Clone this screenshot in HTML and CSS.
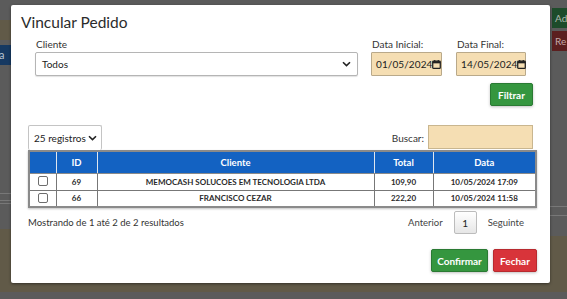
FILE: index.html
```html
<!DOCTYPE html>
<html lang="pt-BR">
<head>
<meta charset="utf-8">
<title>Vincular Pedido</title>
<link rel="stylesheet" href="styles.css">
</head>
<body>
<div class="page">
  <div class="side side-left">
    <div class="band gray h20"></div>
    <div class="band brown h20"></div>
    <div class="band gray h5"></div>
    <div class="band navy h20"><span class="peek">a</span></div>
    <div class="band gray h128"></div>
    <div class="band line"></div>
    <div class="band gray h6"></div>
    <div class="band line"></div>
    <div class="band gray h2"></div>
    <div class="band line"></div>
    <div class="band gray h25"></div>
    <div class="band brown grow"></div>
    <div class="band gray h7"></div>
  </div>
  <div class="side side-mid">
    <div class="band gray h5"></div>
    <div class="band gray grow"></div>
    <div class="band brown h62"></div>
    <div class="band gray h7"></div>
  </div>
  <div class="side side-right">
    <div class="band gray h8"></div>
    <div class="pbtn pgreen">Ad</div>
    <div class="band gray h3"></div>
    <div class="pbtn pred">Re</div>
    <div class="band gray h155"></div>
    <div class="band line"></div>
    <div class="band gray h8"></div>
    <div class="band line"></div>
    <div class="band gray h20"></div>
    <div class="band brown grow"></div>
    <div class="band gray h7"></div>
  </div>
</div>

<div class="modal">
  <h1 class="title">Vincular Pedido</h1>

  <div class="filters">
    <div class="field field-client">
      <label class="lbl">Cliente</label>
      <div class="select select-client">
        <span>Todos</span>
        <svg class="chev" width="9" height="6" viewBox="0 0 9 6"><path d="M1 1.2 4.5 4.6 8 1.2" fill="none" stroke="#222" stroke-width="1.6"/></svg>
      </div>
    </div>
    <div class="field field-date">
      <label class="lbl">Data Inicial:</label>
      <div class="date">
        <span class="dval">01/05/2024</span>
        <svg class="cal" width="9" height="9" viewBox="0 0 10 10"><rect x="0.8" y="1.3" width="8.4" height="8" rx="0.8" fill="none" stroke="#222" stroke-width="1.4"/><rect x="0.8" y="1.3" width="8.4" height="2.4" fill="#222"/><rect x="2.4" y="0" width="1.3" height="2" fill="#222"/><rect x="6.3" y="0" width="1.3" height="2" fill="#222"/></svg>
      </div>
    </div>
    <div class="field field-date2">
      <label class="lbl">Data Final:</label>
      <div class="date">
        <span class="dval">14/05/2024</span>
        <svg class="cal" width="9" height="9" viewBox="0 0 10 10"><rect x="0.8" y="1.3" width="8.4" height="8" rx="0.8" fill="none" stroke="#222" stroke-width="1.4"/><rect x="0.8" y="1.3" width="8.4" height="2.4" fill="#222"/><rect x="2.4" y="0" width="1.3" height="2" fill="#222"/><rect x="6.3" y="0" width="1.3" height="2" fill="#222"/></svg>
      </div>
    </div>
  </div>

  <div class="filter-action">
    <button class="btn btn-green btn-filter">Filtrar</button>
  </div>

  <div class="table-wrap">
    <div class="tools">
      <div class="select select-len">
        <span>25 registros</span>
        <svg class="chev" width="9" height="6" viewBox="0 0 9 6"><path d="M1 1.2 4.5 4.6 8 1.2" fill="none" stroke="#222" stroke-width="1.6"/></svg>
      </div>
      <div class="search">
        <span class="search-lbl">Buscar:</span>
        <div class="search-input"></div>
      </div>
    </div>

    <table class="grid">
      <colgroup>
        <col class="c-chk"><col class="c-id"><col class="c-cli"><col class="c-tot"><col class="c-dat">
      </colgroup>
      <thead>
        <tr><th></th><th>ID</th><th>Cliente</th><th>Total</th><th>Data</th></tr>
      </thead>
      <tbody>
        <tr><td><span class="chk"></span></td><td>69</td><td>MEMOCASH SOLUCOES EM TECNOLOGIA LTDA</td><td>109,90</td><td>10/05/2024 17:09</td></tr>
        <tr><td><span class="chk"></span></td><td>66</td><td>FRANCISCO CEZAR</td><td>222,20</td><td>10/05/2024 11:58</td></tr>
      </tbody>
    </table>

    <div class="info-row">
      <span class="info">Mostrando de 1 até 2 de 2 resultados</span>
      <div class="pager">
        <span class="pg-link">Anterior</span>
        <span class="pg-cur">1</span>
        <span class="pg-link">Seguinte</span>
      </div>
    </div>
  </div>

  <div class="modal-foot">
    <button class="btn btn-green btn-confirm">Confirmar</button>
    <button class="btn btn-red btn-close">Fechar</button>
  </div>
</div>
</body>
</html>
```
FILE: styles.css
```css
* { box-sizing: border-box; }
html, body { margin: 0; padding: 0; }
body {
  width: 567px;
  height: 299px;
  overflow: hidden;
  font-family: "Lato", "Noto Sans", sans-serif;
  background: #5b5b5b;
  position: relative;
}

/* background page (under the backdrop) */
.page {
  display: flex;
  height: 299px;
}
.side { display: flex; flex-direction: column; }
.side-left { width: 11px; }
.side-mid { flex: 1; }
.side-right { width: 17px; }
.band { flex: none; }
.grow { flex: 1; }
.gray { background: #5b5b5b; }
.brown { background: #615a48; }
.navy { background: #163962; color: #b9c4d2; font-size: 11px; line-height: 20px; overflow: hidden; }
.peek { margin-left: -1px; }
.line { height: 1px; background: #787878; }
.h2 { height: 2px; } .h3 { height: 3px; } .h5 { height: 5px; } .h6 { height: 6px; } .h7 { height: 7px; } .h8 { height: 8px; }
.h20 { height: 20px; } .h25 { height: 25px; } .h62 { height: 62px; } .h128 { height: 128px; } .h155 { height: 155px; }
.pbtn {
  height: 20px;
  font-size: 10px;
  line-height: 20px;
  padding-left: 3px;
  margin-left: 2px;
  white-space: nowrap;
}
.pgreen { background: #1d4b2a; color: #aeb9af; }
.pred { background: #5b1f1f; color: #c3a9a9; }

/* modal */
.modal {
  position: absolute;
  left: 11px;
  top: 5px;
  width: 539px;
  height: 278px;
  background: #fff;
  border-radius: 2px;
  box-shadow: 0 1px 3px rgba(0,0,0,0.45);
  display: flex;
  flex-direction: column;
  color: #333;
}
.title {
  margin: 0;
  padding: 8px 0 0 10px;
  height: 27px;
  font-size: 15.5px;
  line-height: 19px;
  font-weight: 400;
  color: #2b2b2b;
}

.filters {
  display: flex;
  gap: 13px;
  padding: 6px 24px 0 24px;
}
.field { display: flex; flex-direction: column; }
.field-client { width: 323px; }
.field-date { width: 71px; margin-right: 1px; }
.field-date2 { width: 70px; }
.lbl {
  font-size: 10px;
  line-height: 13px;
  color: #333;
  padding-left: 1px;
  height: 14px;
}

.select {
  display: flex;
  align-items: center;
  justify-content: space-between;
  border: 1px solid #b5b5b5;
  border-radius: 2px;
  background: #fff;
  color: #222;
  font-size: 10px;
  box-shadow: 0 1px 1px rgba(0,0,0,0.12);
}
.select-client { height: 24px; padding: 0 6px 0 6px; }
.date {
  height: 24px;
  display: flex;
  align-items: center;
  justify-content: space-between;
  background: #f5deb3;
  border: 1px solid #b9a98a;
  border-radius: 1px;
  padding: 0 3px 0 4px;
  font-size: 10px;
  color: #222;
}
.dval { white-space: nowrap; letter-spacing: 0.1px; }
.cal { flex: none; }

.filter-action {
  display: flex;
  justify-content: flex-end;
  padding: 7px 17px 0 0;
}
.btn {
  font-family: inherit;
  border-radius: 2px;
  color: #fff;
  font-size: 10px;
  font-weight: 700;
  height: 23px;
  padding: 0;
  cursor: pointer;
  box-shadow: 0 1px 3px rgba(0,0,0,0.25);
}
.btn-green { background: #35963f; border: 1px solid #2a7a33; }
.btn-red { background: #d8343a; border: 1px solid #b82a2f; }
.btn-filter { width: 43px; }

.table-wrap {
  padding: 19px 13px 0 17px;
}
.tools {
  display: flex;
  justify-content: space-between;
  align-items: flex-end;
  height: 25px;
}
.select-len {
  width: 74px;
  height: 25px;
  padding: 0 4px 0 5px;
  border-color: #c4c4c4;
  border-bottom: none;
  box-shadow: none;
}
.search { display: flex; align-items: center; gap: 4px; margin-right: 4px; }
.search-lbl { font-size: 10px; color: #333; }
.search-input {
  width: 105px;
  height: 24px;
  background: #f5deb3;
  border: 1px solid #c9b68f;
  margin-bottom: 1px;
}

.grid {
  width: 509px;
  table-layout: fixed;
  border-collapse: collapse;
  border: 2px solid #8a8a8a;
  box-shadow: 0 1px 2px rgba(0,0,0,0.25);
  font-size: 8px;
  color: #222;
}
.c-chk { width: 27px; }
.c-id { width: 41px; }
.c-cli { width: 277px; }
.c-tot { width: 59px; }
.c-dat { width: auto; }
.grid th {
  background: #1362c2;
  color: #fff;
  font-weight: 700;
  font-size: 9.5px;
  height: 22px;
  border-left: 1px solid #dfe6ef;
  border-bottom: 1px solid #8a8a8a;
  padding: 0;
}
.grid th:first-child { border-left: none; }
.grid td {
  height: 17px;
  text-align: center;
  border: 1px solid #777;
  padding: 0;
  font-weight: 700;
  color: #2a2a2a;
}
.chk {
  display: inline-block;
  width: 10px;
  height: 10px;
  border: 1px solid #6d6d6d;
  border-radius: 2px;
  background: #fff;
  vertical-align: middle;
  margin-top: -2px;
}

.info-row {
  display: flex;
  justify-content: space-between;
  align-items: center;
  margin-top: 3px;
}
.info { font-size: 9.5px; color: #333; }
.pager { display: flex; align-items: center; margin-right: 13px; }
.pg-link { font-size: 9.5px; color: #444; }
.pg-cur {
  width: 23px;
  height: 23px;
  margin: 0 11px;
  border: 1px solid #bcbcbc;
  border-radius: 2px;
  background: linear-gradient(#fff, #e6e6e6);
  font-size: 10px;
  display: flex;
  align-items: center;
  justify-content: center;
  color: #222;
}

.modal-foot {
  display: flex;
  justify-content: flex-end;
  gap: 5px;
  padding: 15px 13px 0 0;
}
.btn-confirm { width: 57px; }
.btn-close { width: 44px; }
```
